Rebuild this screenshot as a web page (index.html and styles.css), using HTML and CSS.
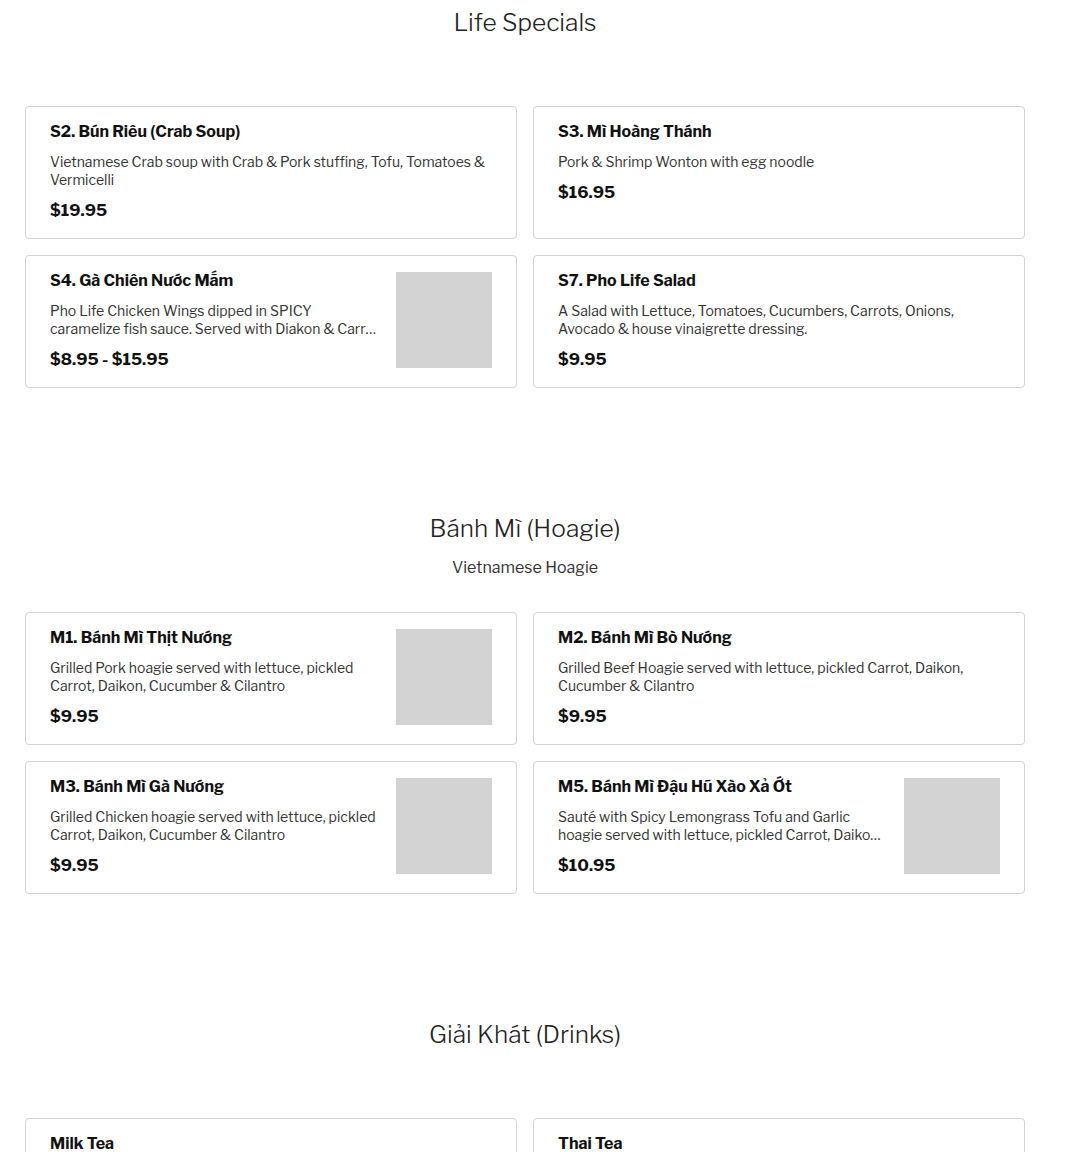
FILE: index.html
```html
<!DOCTYPE html>
<html lang="vi">
<head>
<meta charset="utf-8">
<title>Pho Life Menu</title>
<link rel="stylesheet" href="styles.css">
</head>
<body>
<main class="menu">
  <section class="section">
    <h2 class="section-title">Life Specials</h2>
    <p class="section-sub"></p>
    <div class="grid">
      <div class="card">
        <div class="card-text">
          <h3 class="item-name">S2. Bún Riêu (Crab Soup)</h3>
          <p class="item-desc">Vietnamese Crab soup with Crab &amp; Pork stuffing, Tofu, Tomatoes &amp; Vermicelli</p>
          <p class="item-price">$19.95</p>
        </div>
      </div>
      <div class="card">
        <div class="card-text">
          <h3 class="item-name">S3. Mì Hoàng Thánh</h3>
          <p class="item-desc">Pork &amp; Shrimp Wonton with egg noodle</p>
          <p class="item-price">$16.95</p>
        </div>
      </div>
      <div class="card">
        <div class="card-text">
          <h3 class="item-name">S4. Gà Chiên Nước Mắm</h3>
          <p class="item-desc">Pho Life Chicken Wings dipped in SPICY caramelize fish sauce. Served with Diakon &amp; Carrot pickles and fresh herbs</p>
          <p class="item-price">$8.95 - $15.95</p>
        </div>
        <div class="thumb"></div>
      </div>
      <div class="card">
        <div class="card-text">
          <h3 class="item-name">S7. Pho Life Salad</h3>
          <p class="item-desc">A Salad with Lettuce, Tomatoes, Cucumbers, Carrots, Onions, Avocado &amp; house vinaigrette dressing.</p>
          <p class="item-price">$9.95</p>
        </div>
      </div>
    </div>
  </section>

  <section class="section">
    <h2 class="section-title">Bánh Mì (Hoagie)</h2>
    <p class="section-sub">Vietnamese Hoagie</p>
    <div class="grid">
      <div class="card">
        <div class="card-text">
          <h3 class="item-name">M1. Bánh Mì Thịt Nướng</h3>
          <p class="item-desc">Grilled Pork hoagie served with lettuce, pickled Carrot, Daikon, Cucumber &amp; Cilantro</p>
          <p class="item-price">$9.95</p>
        </div>
        <div class="thumb"></div>
      </div>
      <div class="card">
        <div class="card-text">
          <h3 class="item-name">M2. Bánh Mì Bò Nướng</h3>
          <p class="item-desc">Grilled Beef Hoagie served with lettuce, pickled Carrot, Daikon, Cucumber &amp; Cilantro</p>
          <p class="item-price">$9.95</p>
        </div>
      </div>
      <div class="card">
        <div class="card-text">
          <h3 class="item-name">M3. Bánh Mì Gà Nướng</h3>
          <p class="item-desc">Grilled Chicken hoagie served with lettuce, pickled Carrot, Daikon, Cucumber &amp; Cilantro</p>
          <p class="item-price">$9.95</p>
        </div>
        <div class="thumb"></div>
      </div>
      <div class="card">
        <div class="card-text">
          <h3 class="item-name">M5. Bánh Mì Đậu Hũ Xào Xả Ớt</h3>
          <p class="item-desc">Sauté with Spicy Lemongrass Tofu and Garlic hoagie served with lettuce, pickled Carrot, Daikon, Cucumber &amp; Cilantro</p>
          <p class="item-price">$10.95</p>
        </div>
        <div class="thumb"></div>
      </div>
    </div>
  </section>

  <section class="section">
    <h2 class="section-title">Giải Khát (Drinks)</h2>
    <p class="section-sub"></p>
    <div class="grid">
      <div class="card">
        <div class="card-text">
          <h3 class="item-name">Milk Tea</h3>
        </div>
      </div>
      <div class="card">
        <div class="card-text">
          <h3 class="item-name">Thai Tea</h3>
        </div>
      </div>
    </div>
  </section>
</main>
</body>
</html>
```

FILE: styles.css
```css
html, body {
  margin: 0;
  padding: 0;
  background: #fff;
}

body {
  font-family: "Libre Franklin", Inter, "Liberation Sans", sans-serif;
  color: #111;
  padding-top: 4px;
}

.menu {
  width: 1000px;
  margin-left: 25px;
}

.section {
  margin-bottom: 122px;
}

.section-title {
  margin: 0;
  font-size: 24.5px;
  line-height: 36px;
  font-weight: 300;
  color: #222;
  text-align: center;
}

.section-sub {
  margin: 10px 0 0;
  min-height: 24px;
  font-size: 16px;
  line-height: 24px;
  color: #333;
  text-align: center;
}

.grid {
  margin-top: 32px;
  display: grid;
  grid-template-columns: 1fr 1fr;
  gap: 16px;
}

.card {
  display: flex;
  align-items: flex-start;
  gap: 16px;
  min-height: 97px;
  padding: 17px 24px 17px;
  border: 1px solid #d4d4d4;
  border-radius: 4px;
}

.card .thumb {
  margin-top: -1px;
}

.card-text {
  flex: 1;
  min-width: 0;
}

.item-name {
  margin: 0;
  font-size: 16px;
  line-height: 16px;
  font-weight: 700;
  color: #111;
}

.item-desc {
  margin: 13px 0 0;
  font-size: 14px;
  line-height: 18px;
  color: #333;
  display: -webkit-box;
  -webkit-line-clamp: 2;
  -webkit-box-orient: vertical;
  overflow: hidden;
}

.item-price {
  margin: 11px 0 0;
  font-size: 16.5px;
  line-height: 20px;
  font-weight: 700;
  color: #111;
}

.thumb {
  flex: none;
  width: 96px;
  height: 96px;
  background: #d3d3d3;
}
```
